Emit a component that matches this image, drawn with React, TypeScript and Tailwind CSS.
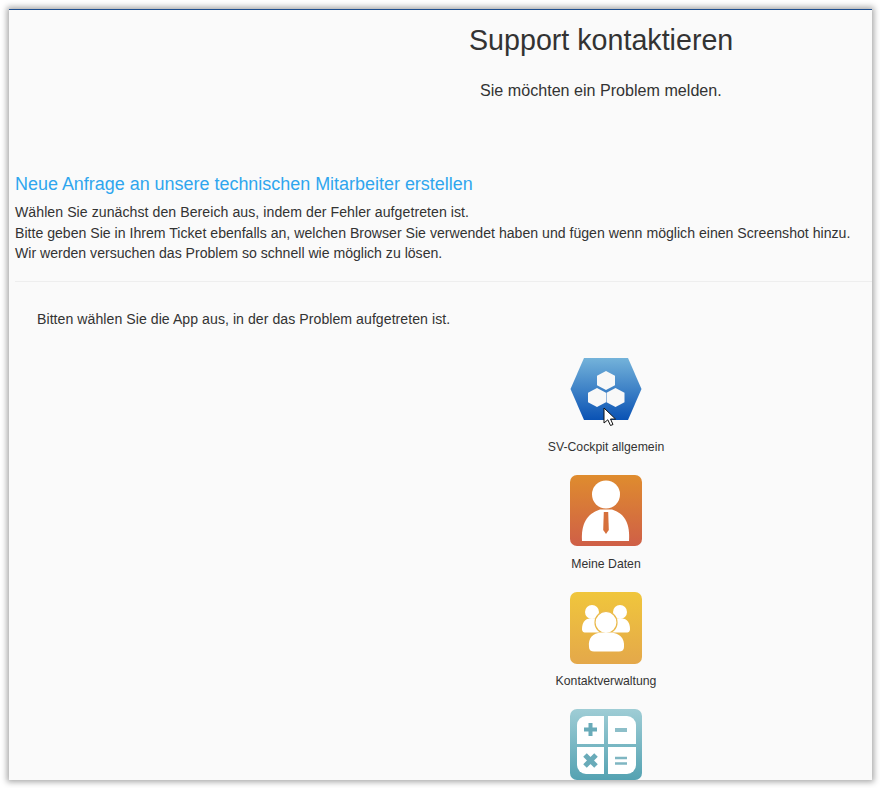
const hexPath = "M0 -9.500 L9 -4.750 L9 4.750 L0 9.500 L-9 4.750 L-9 -4.750 Z";

const CockpitIcon = () => (
  <svg width="72" height="63" viewBox="0 0 72 63" className="block">
    <defs>
      <linearGradient id="cockpit" x1="0" y1="0" x2="0" y2="1">
        <stop offset="0" stopColor="#74b3da" />
        <stop offset="1" stopColor="#0a52b4" />
      </linearGradient>
    </defs>
    <path d="M14 0 H58 L71.500 31 L58 62 H14 L0.500 31 Z" fill="url(#cockpit)" />
    <path d={hexPath} fill="#f8f8f8" transform="translate(36 22.500)" />
    <path d={hexPath} fill="#f8f8f8" transform="translate(27 39.500)" />
    <path d={hexPath} fill="#f8f8f8" transform="translate(45.500 39.500)" />
  </svg>
);

const DatenIcon = () => (
  <svg width="72" height="71" viewBox="0 0 72 71" className="block">
    <defs>
      <linearGradient id="daten" x1="0" y1="0" x2="0" y2="1">
        <stop offset="0" stopColor="#df8c2e" />
        <stop offset="1" stopColor="#cf5f47" />
      </linearGradient>
    </defs>
    <rect width="72" height="71" rx="7" fill="url(#daten)" />
    <circle cx="36" cy="19.500" r="14" fill="#fff" />
    <path d="M12 66 C11 50 16 39 30 34.500 H42 C56 39 60 50 59 66 Z" fill="#fff" />
    <path d="M33.800 37 H38.200 L38.800 55 L36 59 L33.200 55 Z" fill="#d6703c" />
  </svg>
);

const KontaktIcon = () => (
  <svg width="72" height="72" viewBox="0 0 72 72" className="block">
    <defs>
      <linearGradient id="kontakt" x1="0" y1="0" x2="0" y2="1">
        <stop offset="0" stopColor="#f0c63c" />
        <stop offset="1" stopColor="#e4a84a" />
      </linearGradient>
    </defs>
    <rect width="72" height="72" rx="7" fill="url(#kontakt)" />
    <circle cx="22" cy="20" r="7" fill="#fff" />
    <circle cx="50" cy="20" r="7" fill="#fff" />
    <path d="M12 37 C12 31 15 26.500 20 26.500 H52 C57 26.500 60 31 60 37 C60 40 58 40.500 56 40.500 H16 C14 40.500 12 40 12 37 Z" fill="#fff" />
    <circle cx="36" cy="30.500" r="11" fill="#fff" stroke="#eab94a" strokeWidth="1.200" />
    <path d="M19 55 C18 46 23 41 31 40.500 H41 C49 41 55 46 54 55 C54 58 52 59.500 49 59.500 H24 C21 59.500 19 58 19 55 Z" fill="#fff" />
  </svg>
);

const RechnerIcon = () => (
  <svg width="72" height="71" viewBox="0 0 72 71" className="block">
    <defs>
      <linearGradient id="rechner" x1="0" y1="0" x2="0" y2="1">
        <stop offset="0" stopColor="#9fcdd5" />
        <stop offset="1" stopColor="#54a2b2" />
      </linearGradient>
    </defs>
    <rect width="72" height="71" rx="7" fill="url(#rechner)" />
    <path d="M16 7 H34 V35 H7 V16 A9 9 0 0 1 16 7 Z" fill="#fff" />
    <path d="M38 7 H57 A9 9 0 0 1 66 16 V35 H38 Z" fill="#fff" />
    <path d="M7 38 H34 V65 H16 A9 9 0 0 1 7 56 Z" fill="#fff" />
    <path d="M38 38 H66 V56 A9 9 0 0 1 57 65 H38 Z" fill="#fff" />
    <path d="M20.500 14 V27 M14 20.500 H27" stroke="#69abb9" strokeWidth="4" />
    <path d="M45 21 H57" stroke="#8dbfc9" strokeWidth="4" />
    <path d="M15 46 L26 57 M26 46 L15 57" stroke="#69abb9" strokeWidth="5" />
    <path d="M45 49 H57 M45 54.500 H57" stroke="#7fb6c2" strokeWidth="2.500" />
  </svg>
);

const Cursor = () => (
  <svg width="14" height="20" viewBox="0 0 14 20" className="absolute left-[33px] top-[49px]">
    <path d="M1 1 V16 L4.800 12.800 L7.500 18.500 L10 17.500 L7.500 12 H12.500 Z" fill="#fff" stroke="#111" strokeWidth="1" />
  </svg>
);

const apps = [
  { id: "cockpit", label: "SV-Cockpit allgemein", icon: <CockpitIcon />, cursor: true },
  { id: "daten", label: "Meine Daten", icon: <DatenIcon /> },
  { id: "kontakt", label: "Kontaktverwaltung", icon: <KontaktIcon /> },
  { id: "rechner", label: "", icon: <RechnerIcon /> },
];

export default function App() {
  return (
    <div className="w-[880px] h-[788px] bg-white pl-[9px] pt-[9px] pr-[8px] pb-[8px] font-['Liberation_Sans',Arial,sans-serif]">
      <div className="relative h-full overflow-hidden bg-[#fafafa] border-t border-t-[#1f4f8f] shadow-[0_0_6px_2px_rgba(0,0,0,0.35)]">
        <div className="pl-[460px] text-[#333]">
          <h1 className="mt-[10px] w-[264px] whitespace-nowrap text-[28.65px] leading-[40px] text-[#333]">Support kontaktieren</h1>
          <p className="mt-[19px] ml-[11px] text-[16.13px] leading-[22px]">Sie möchten ein Problem melden.</p>
        </div>

        <h2 className="mt-[71px] ml-[6px] text-[17.96px] leading-[24px] text-[#2fa6ee]">
          Neue Anfrage an unsere technischen Mitarbeiter erstellen
        </h2>
        <div className="mt-[6px] ml-[6px] text-[14.12px] leading-[20.500px] text-[#333]">
          <p className="tracking-[0.055px]">Wählen Sie zunächst den Bereich aus, indem der Fehler aufgetreten ist.</p>
          <p>Bitte geben Sie in Ihrem Ticket ebenfalls an, welchen Browser Sie verwendet haben und fügen wenn möglich einen Screenshot hinzu.</p>
          <p className="tracking-[-0.015px]">Wir werden versuchen das Problem so schnell wie möglich zu lösen.</p>
        </div>
        <hr className="mt-[17px] ml-[6px] border-t border-[#eeeeee]" />

        <p className="mt-[27px] ml-[28px] text-[14.12px] leading-[20px] tracking-[0.045px] text-[#333]">
          Bitten wählen Sie die App aus, in der das Problem aufgetreten ist.
        </p>

        <div className="mt-[29px] ml-[497px] flex w-[200px] flex-col items-center gap-[20px]">
          {apps.map((app) => (
            <div key={app.id} className="flex h-[97px] flex-col items-center">
              <div className="relative">
                {app.icon}
                {app.cursor && <Cursor />}
              </div>
              {app.label && <span className="mt-auto text-[12.25px] leading-[15px] text-[#333]">{app.label}</span>}
            </div>
          ))}
        </div>
      </div>
    </div>
  );
}
